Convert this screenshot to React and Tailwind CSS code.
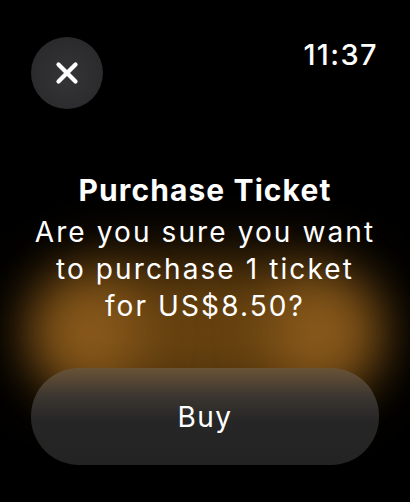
import { X } from 'lucide-react';

export default function App() {
    return (
        <div className="relative w-[410px] h-[502px] overflow-hidden bg-black text-white font-['Inter',sans-serif]">
            {/* warm glow behind the prompt, brighter toward the sides */}
            <div className="absolute left-[30px] top-[262px] w-[350px] h-[140px] rounded-[70px] bg-[#66410f] blur-[30px]"></div>
            <div className="absolute left-[40px] top-[285px] w-[100px] h-[95px] rounded-full bg-[#8a5a1c] blur-[26px]"></div>
            <div className="absolute left-[270px] top-[285px] w-[100px] h-[95px] rounded-full bg-[#8a5a1c] blur-[26px]"></div>

            <div className="relative flex flex-col h-full">
                <div className="flex items-start justify-between pl-[31px] pr-[32px] pt-[37px]">
                    <button className="w-[72px] h-[72px] rounded-full bg-[radial-gradient(circle_at_50%_55%,#353537,#262628)] flex items-center justify-center">
                        <X className="w-[34px] h-[34px]" strokeWidth={3} />
                    </button>
                    <span className="text-[29px] leading-none font-medium tracking-[1.4px] mt-[3px]">11:37</span>
                </div>

                <div className="mt-[64px] flex flex-col items-center text-center">
                    <h1 className="text-[30px] leading-[34px] font-bold tracking-[1.1px]">Purchase Ticket</h1>
                    <p className="mt-[7px] text-[28px] leading-[37px] font-normal tracking-[2.1px]">
                        Are you sure you want
                        <br />
                        to purchase 1 ticket
                        <br />
                        for US$8.50?
                    </p>
                </div>

                <div className="mt-[43px] px-[31px]">
                    <button className="w-full h-[97px] rounded-[48px] bg-[linear-gradient(to_bottom,#6a5336_0%,#3a3530_30%,#262626_55%,#232323_100%)] text-[28px] font-normal tracking-[1.5px]">
                        Buy
                    </button>
                </div>
            </div>
        </div>
    );
}
